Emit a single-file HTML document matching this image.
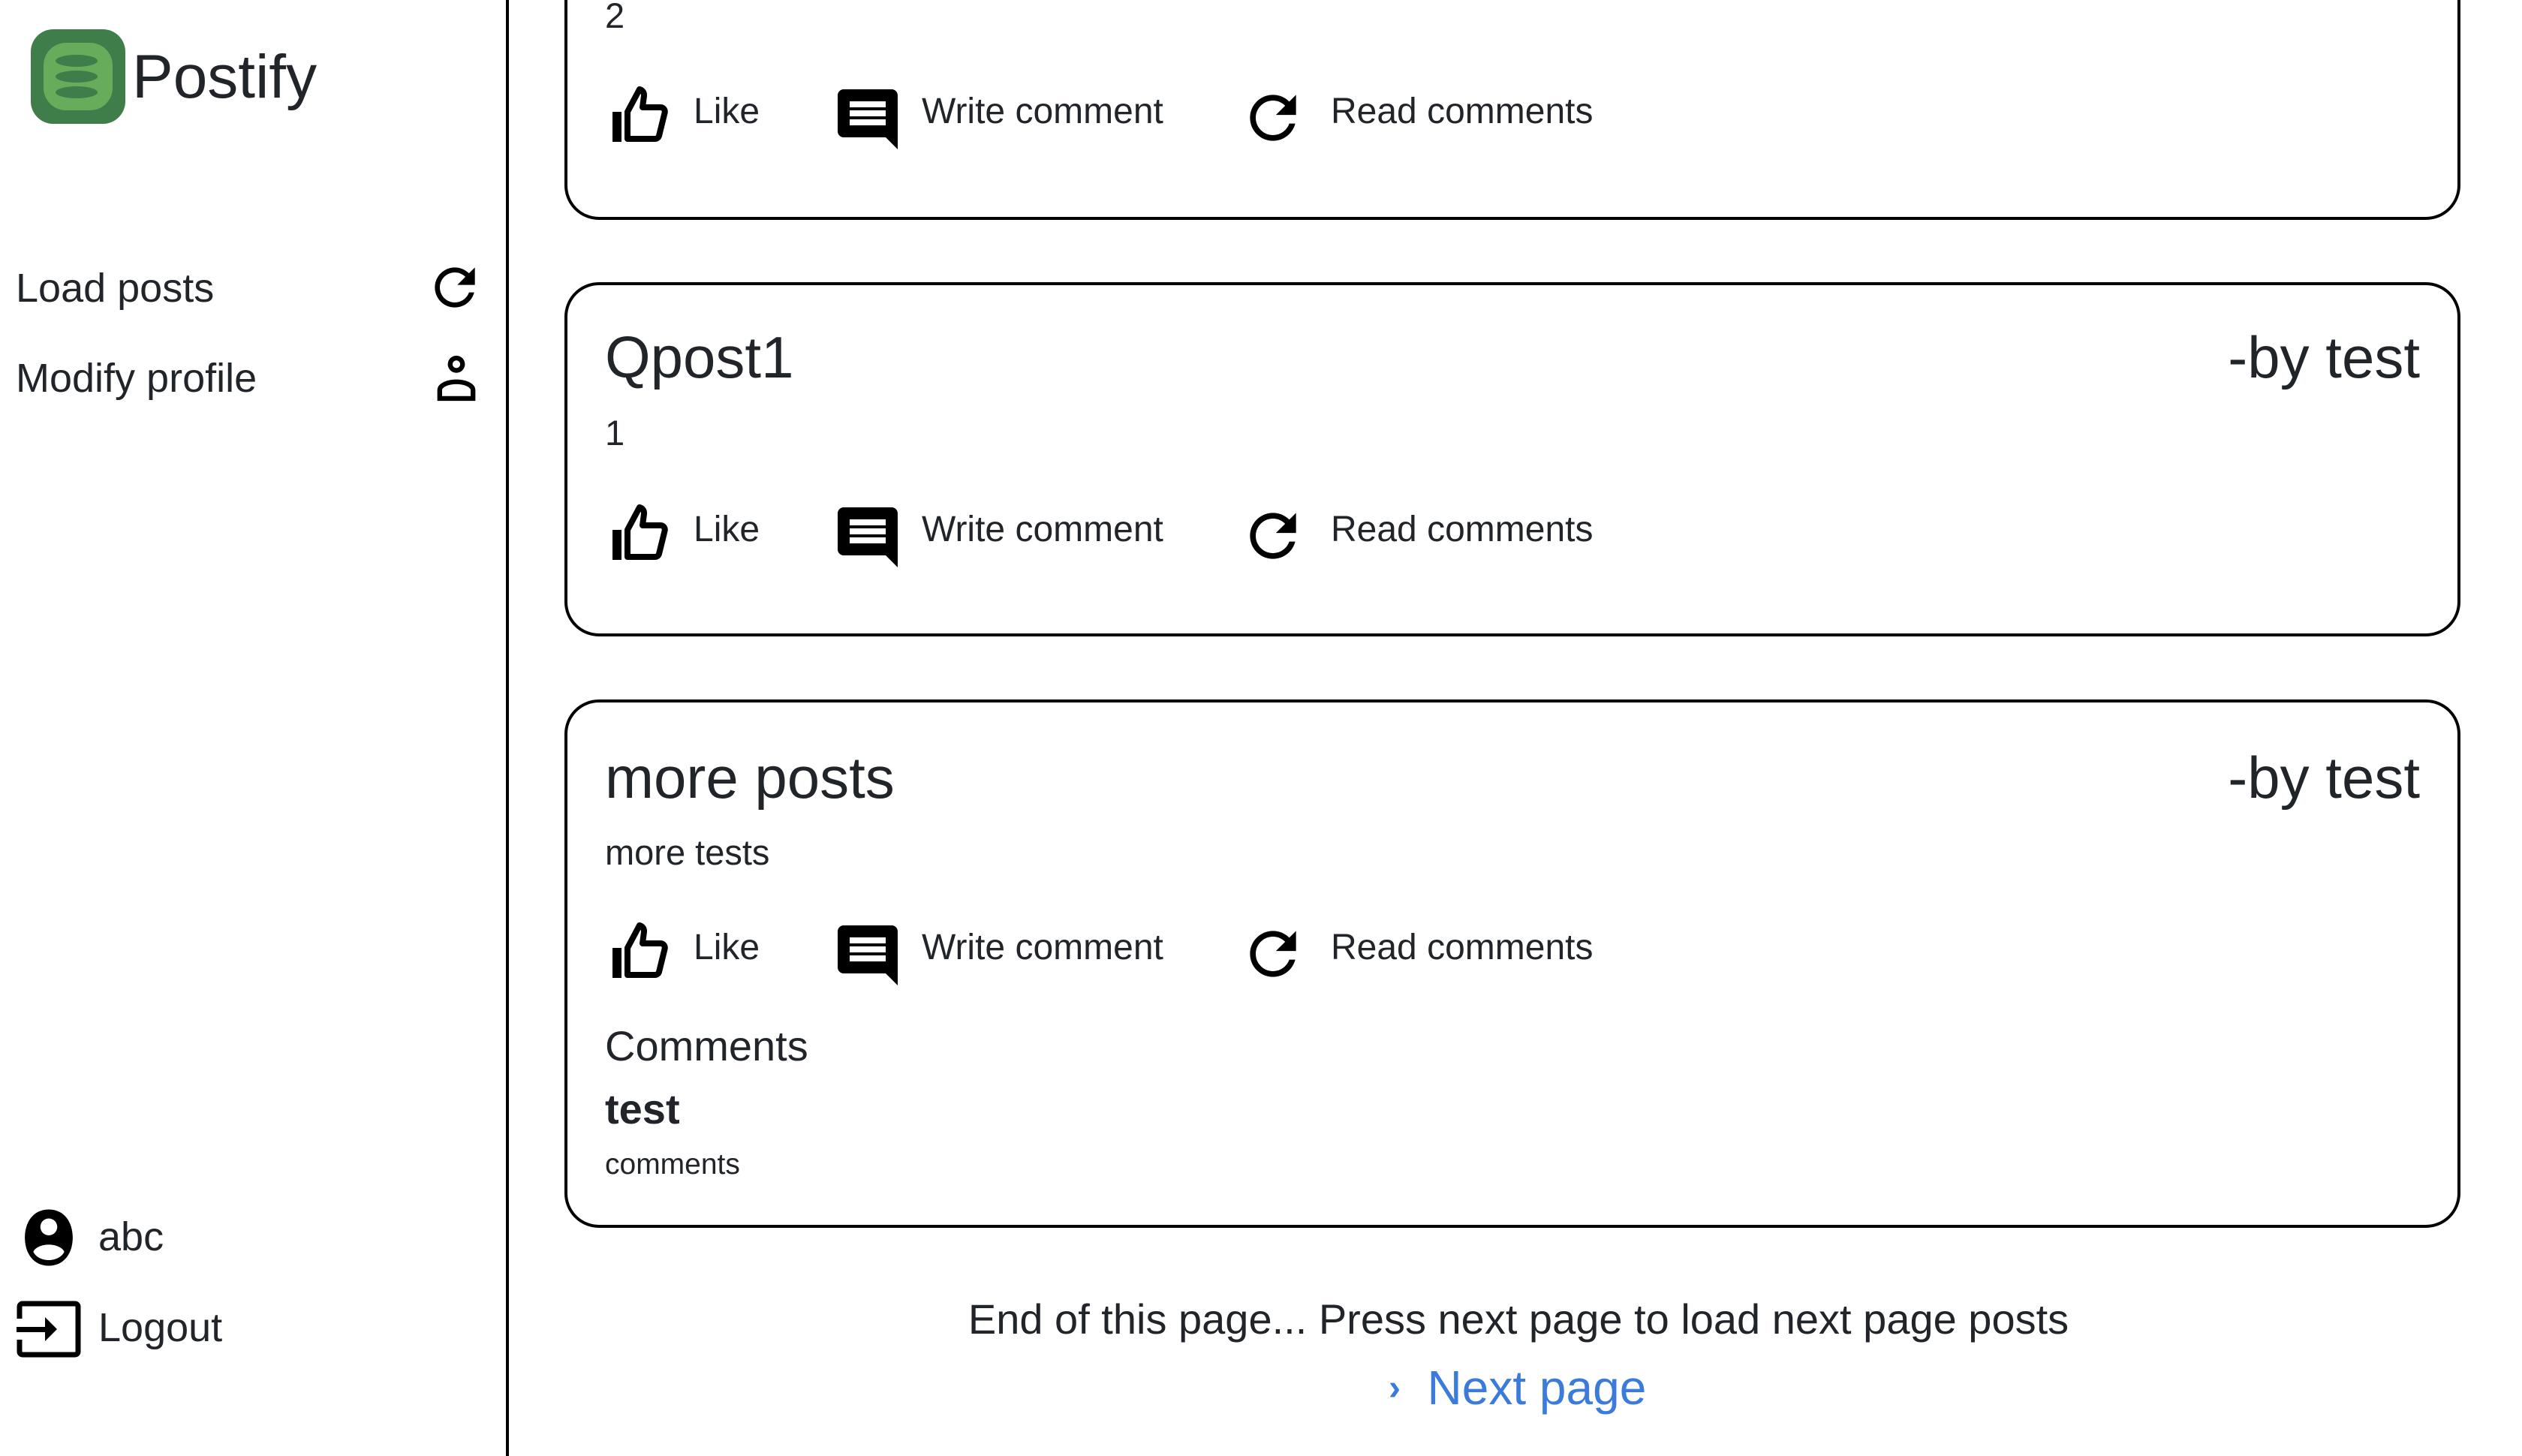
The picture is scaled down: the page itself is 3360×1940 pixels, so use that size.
<!DOCTYPE html>
<html><head><meta charset="utf-8"><style>
*{margin:0;padding:0;box-sizing:border-box}
body{width:3360px;height:1940px;background:#fff;font-family:"Liberation Sans",Arial,sans-serif;color:#212529;position:relative;overflow:hidden}
.a{position:absolute;white-space:nowrap}
.side{position:absolute;left:0;top:0;width:678px;height:1940px;border-right:4px solid #000}
.card{position:absolute;left:752px;width:2526px;border:4px solid #000;border-radius:46px;background:#fff}
.t{font-size:48px;line-height:48px}
svg{position:absolute}
</style></head><body>
<div class="side"></div>

<svg style="left:41px;top:39px" width="126" height="126" viewBox="0 0 126 126">
<rect x="0" y="0" width="126" height="126" rx="30" fill="#3f7d4a"/>
<rect x="17" y="18" width="92" height="90" rx="30" fill="#66ac5a"/>
<ellipse cx="61" cy="42" rx="28" ry="8" fill="#3f7d4a"/>
<ellipse cx="61" cy="63" rx="28" ry="8" fill="#3f7d4a"/>
<ellipse cx="61" cy="84" rx="28" ry="8" fill="#3f7d4a"/>
</svg>
<div class="a" style="left:176px;top:58px;font-size:82px;line-height:90px">Postify</div>

<div class="a" style="left:21px;top:356px;font-size:54px;line-height:56px">Load posts</div>
<svg style="left:566px;top:343px" width="80" height="80" viewBox="0 0 24 24"><path d="M17.65 6.35C16.2 4.9 14.21 4 12 4c-4.42 0-7.99 3.58-7.99 8s3.57 8 7.99 8c3.73 0 6.84-2.55 7.73-6h-2.08c-.82 2.33-3.04 4-5.65 4-3.31 0-6-2.69-6-6s2.69-6 6-6c1.66 0 3.14.69 4.22 1.78L13 11h7V4l-2.35 2.35z"/></svg>
<div class="a" style="left:21px;top:476px;font-size:54px;line-height:56px">Modify profile</div>
<svg style="left:570px;top:466px" width="76" height="76" viewBox="0 0 24 24"><path d="M12 2.5a3.6 3.6 0 1 1 0 7.2 3.6 3.6 0 0 1 0-7.2zm0 2a1.6 1.6 0 1 0 0 3.2 1.6 1.6 0 0 0 0-3.2zM12 12.5c-4 0-8 1.6-8 4.5v4.5h16V17c0-2.9-4-4.5-8-4.5zm0 2c3.2 0 6 1.2 6 2.5v2.5H6V17c0-1.3 2.8-2.5 6-2.5z"/></svg>

<svg style="left:20px;top:1604px" width="90" height="90" viewBox="0 0 24 24"><path d="M12 2C6.5 2 3.5 6.5 3.5 12S6.5 22 12 22s8.5-4.5 8.5-10S17.5 2 12 2zm0 3.2a3 3 0 1 1 0 6 3 3 0 0 1 0-6zm0 14.8c-2.6 0-4.8-1.3-5.5-3 .7-1.5 3-2.5 5.5-2.5s4.8 1 5.5 2.5c-.7 1.7-2.9 3-5.5 3z"/></svg>
<div class="a" style="left:131px;top:1620px;font-size:54px;line-height:56px">abc</div>
<svg style="left:22px;top:1733px" width="86" height="76" viewBox="0 0 86 76"><path d="M4 24V8a4 4 0 0 1 4-4h70a4 4 0 0 1 4 4v60a4 4 0 0 1-4 4H8a4 4 0 0 1-4-4V52" fill="none" stroke="#000" stroke-width="7"/><path d="M0 35h38V22l16 16-16 16V42H0z"/></svg>
<div class="a" style="left:131px;top:1741px;font-size:54px;line-height:56px">Logout</div>

<div class="card" style="top:-60px;height:353px"></div>
<div class="a" style="left:806px;top:-3px;font-size:47px;line-height:48px">2</div>

<div class="card" style="top:376px;height:472px"></div>
<div class="a" style="left:806px;top:435px;font-size:78px;line-height:82px">Qpost1</div>
<div class="a" style="right:136px;top:435px;font-size:78px;line-height:82px">-by test</div>
<div class="a" style="left:806px;top:553px;font-size:47px;line-height:48px">1</div>

<div class="card" style="top:932px;height:704px"></div>
<div class="a" style="left:806px;top:995px;font-size:78px;line-height:82px">more posts</div>
<div class="a" style="right:136px;top:995px;font-size:78px;line-height:82px">-by test</div>
<div class="a" style="left:806px;top:1112px;font-size:47px;line-height:48px">more tests</div>
<div class="a" style="left:806px;top:1365px;font-size:56px;line-height:58px">Comments</div>
<div class="a" style="left:806px;top:1449px;font-size:56px;line-height:58px;font-weight:bold">test</div>
<div class="a" style="left:806px;top:1532px;font-size:39px;line-height:40px">comments</div>

<div class="a" style="left:0;width:4046px;text-align:center;top:1728px;font-size:56px;line-height:60px">End of this page... Press next page to load next page posts</div>
<div class="a" style="left:1850px;top:1816px;font-size:64px;line-height:66px;color:#3b7bdc"><span style="font-size:48px;font-weight:bold;position:relative;top:-6px">›</span>&nbsp;&nbsp;Next page</div>

<div id="rows"></div>
<script>
var ys=[151,708,1265],h='';
var thumb='<path d="M4 11h3v10H4z"/><path d="M9 20V11l4-7.5c1 .3 1.6 1 1.5 2.2L14 9.5h6c1 0 1.6.9 1.4 1.8L19.5 19c-.2.6-.7 1-1.3 1z" fill="none" stroke="#000" stroke-width="2" stroke-linejoin="round"/>';
var cm='<path d="M21.99 4c0-1.1-.89-2-1.99-2H4c-1.1 0-2 .9-2 2v12c0 1.1.9 2 2 2h14l4 4-.01-18zM18 14H6v-2h12v2zm0-3H6V9h12v2zm0-3H6V6h12v2z"/>';
var rf='<path d="M17.65 6.35C16.2 4.9 14.21 4 12 4c-4.42 0-7.99 3.58-7.99 8s3.57 8 7.99 8c3.73 0 6.84-2.55 7.73-6h-2.08c-.82 2.33-3.04 4-5.65 4-3.31 0-6-2.69-6-6s2.69-6 6-6c1.66 0 3.14.69 4.22 1.78L13 11h7V4l-2.35 2.35z"/>';
ys.forEach(function(y){
h+='<svg style="left:800px;top:'+(y-46)+'px" width="96" height="96" viewBox="0 0 24 24">'+thumb+'</svg>';
h+='<div class="a t" style="left:924px;top:'+(y-26)+'px">Like</div>';
h+='<svg style="left:1108px;top:'+(y-40)+'px" width="96" height="96" viewBox="0 0 24 24">'+cm+'</svg>';
h+='<div class="a t" style="left:1228px;top:'+(y-26)+'px">Write comment</div>';
h+='<svg style="left:1650px;top:'+(y-40)+'px" width="92" height="92" viewBox="0 0 24 24">'+rf+'</svg>';
h+='<div class="a t" style="left:1773px;top:'+(y-26)+'px">Read comments</div>';
});
document.getElementById('rows').innerHTML=h;
</script>
</body></html>
